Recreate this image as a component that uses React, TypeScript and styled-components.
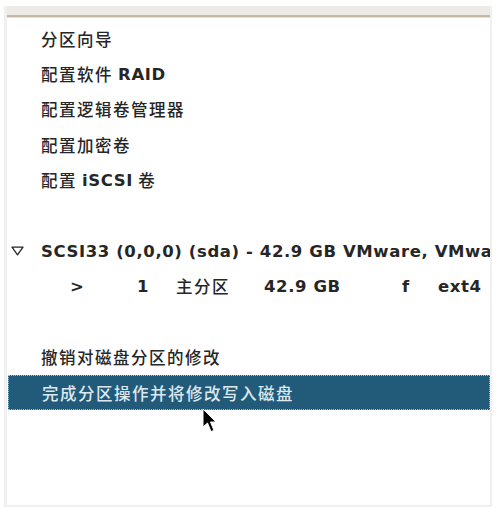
import React from "react"
import styled, { createGlobalStyle } from "styled-components"

const GlobalStyle = createGlobalStyle`
  html, body {
    margin: 0;
    padding: 0;
    background: #ffffff;
  }
  body {
    font-family: "DejaVu Sans", "Noto Sans CJK SC", sans-serif;
  }
`

const Page = styled.div`
  position: relative;
  width: 498px;
  height: 514px;
  padding: 6px 6px 0 4px;
  box-sizing: border-box;
`

const Frame = styled.div`
  width: 488px;
  height: 501px;
  box-sizing: border-box;
  border: 3px solid #f0f0f0;
  border-top: none;
  border-right-width: 2px;
  border-bottom-width: 2px;
  background: #fff;
  display: flex;
  flex-direction: column;
  overflow: hidden;
`

const HeaderBar = styled.div`
  height: 9px;
  margin: 0 -2px 0 -3px;
  background: #eeebe7;
  border-bottom: 2px solid #c6b6a6;
  box-shadow: 0 1px 0 #e6e0da;
`

const List = styled.ul`
  list-style: none;
  margin: 0;
  padding: 4px 0 0;
`

const Row = styled.li<{ selected?: boolean }>`
  height: 35.4px;
  display: flex;
  align-items: center;
  padding-left: 34px;
  font-size: 16px;
  color: ${p => (p.selected ? "#dde8ee" : "#262626")};
  background: ${p => (p.selected ? "#225a7a" : "transparent")};
  outline: ${p => (p.selected ? "1px dotted #a9c3d3" : "none")};
  outline-offset: -1px;
  margin-left: ${p => (p.selected ? "1px" : "0")};
  white-space: nowrap;
`

const Cjk = styled.span`
  font-family: "Noto Sans CJK SC", sans-serif;
  font-weight: 500;
  font-size: 16.5px;
  letter-spacing: 1.5px;
`

const Latin = styled.span`
  font-family: "DejaVu Sans", sans-serif;
  font-weight: 700;
  font-size: 16.5px;
  letter-spacing: 0.6px;
`

const DiskRow = styled(Row)`
  position: relative;
  padding-left: 34px;
`

const Expander = styled.svg`
  position: absolute;
  left: 4px;
  top: 13px;
`

const PartRow = styled(Row)`
  display: grid;
  grid-template-columns: 67px 39px 88px 138px 36px 1fr;
  padding-left: 63px;
`

const Cursor = styled.svg`
  position: absolute;
  left: 202px;
  top: 408px;
`

const Spacer = () => <Row />

export default function App() {
  return (
    <>
      <GlobalStyle />
      <Page>
        <Frame>
          <HeaderBar />
          <List>
            <Row>
              <Cjk>分区向导</Cjk>
            </Row>
            <Row>
              <Cjk>配置软件</Cjk>&nbsp;<Latin>RAID</Latin>
            </Row>
            <Row>
              <Cjk>配置逻辑卷管理器</Cjk>
            </Row>
            <Row>
              <Cjk>配置加密卷</Cjk>
            </Row>
            <Row>
              <Cjk>配置</Cjk>&nbsp;<Latin>iSCSI</Latin>&nbsp;<Cjk>卷</Cjk>
            </Row>
            <Spacer />
            <DiskRow>
              <Expander width="13" height="10" viewBox="0 0 13 10">
                <path d="M1 1.2 H12 L6.5 8.8 Z" fill="none" stroke="#262626" strokeWidth="1.3" strokeLinejoin="round" />
              </Expander>
              <Latin>SCSI33 (0,0,0) (sda) - 42.9 GB VMware, VMware Virtual disk</Latin>
            </DiskRow>
            <PartRow>
              <Latin>&gt;</Latin>
              <Latin>1</Latin>
              <Cjk>主分区</Cjk>
              <Latin>42.9 GB</Latin>
              <Latin>f</Latin>
              <Latin>ext4</Latin>
            </PartRow>
            <Spacer />
            <Row>
              <Cjk>撤销对磁盘分区的修改</Cjk>
            </Row>
            <Row selected>
              <Cjk>完成分区操作并将修改写入磁盘</Cjk>
            </Row>
          </List>
        </Frame>
        <Cursor width="17" height="26" viewBox="0 0 17 26">
          <path d="M1 1 L1 19 L5.5 15 L9 23.5 L12 22.5 L8.5 14 L14 14 Z" fill="#000" stroke="#fff" strokeWidth="1" strokeLinejoin="round" />
        </Cursor>
      </Page>
    </>
  )
}
